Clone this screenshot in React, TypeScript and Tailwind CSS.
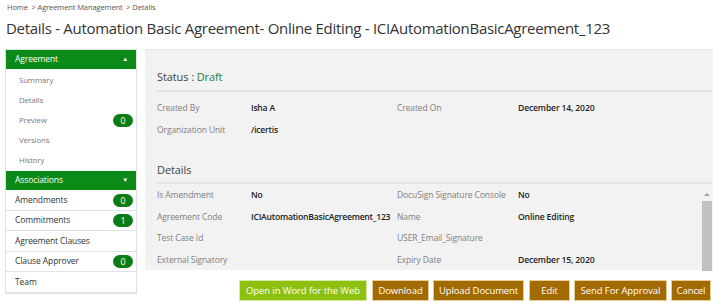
import React from "react";

const font = { fontFamily: '"Open Sans", "Noto Sans", Arial, sans-serif' };

function Badge({ n }: { n: string }) {
  return (
    <span className="inline-flex h-[13px] w-[20px] items-center justify-center rounded-full bg-[#0b7d15] text-[9px] leading-none text-white">
      {n}
    </span>
  );
}

function Row({ l1, v1, l2, v2 }: { l1: string; v1?: string; l2?: string; v2?: string }) {
  return (
    <div className="flex h-[21.7px] items-center whitespace-nowrap">
      <div className="w-[94px] text-[8.5px] tracking-[-0.1px] text-[#808080]">{l1}</div>
      <div className="w-[146px] text-[8.6px] tracking-[-0.22px] font-semibold text-[#222]">{v1}</div>
      <div className="w-[121px] text-[8.5px] tracking-[-0.1px] text-[#808080]">{l2}</div>
      <div className="text-[8.6px] tracking-[-0.15px] font-semibold text-[#222]">{v2}</div>
    </div>
  );
}

const btn = "flex h-[21px] items-center justify-center border border-[#e3cf9c] bg-[#a36a00]";

export default function App() {
  return (
    <div className="h-[308px] w-[720px] overflow-hidden bg-white" style={font}>
      <div className="px-[7px] pt-[2px] text-[7.5px] tracking-[-0.1px] text-[#555]">Home &nbsp;&gt; Agreement Management &nbsp;&gt; Details</div>
      <div className="mt-[5px] px-[6px] text-[15px] leading-[20px] tracking-[-0.3px] text-[#333]">
        Details - Automation Basic Agreement- Online Editing - ICIAutomationBasicAgreement_123
      </div>
      <div className="mt-[11px] flex">
        <div className="ml-[5px] w-[132px] self-start border border-[#e0e0e0] pb-[0px]">
          <div className="flex h-[19px] items-center justify-between bg-[#0b8a18] pl-[9px] pr-[8px] text-[8.5px] tracking-[-0.1px] text-white">
            <span>Agreement</span>
            <span className="text-[6px]">▲</span>
          </div>
          <div className="text-[7.8px] tracking-[-0.1px] text-[#7a7a7a]">
            <div className="flex h-[20px] items-center pl-[13px] pt-[3px]">Summary</div>
            <div className="flex h-[20px] items-center pl-[13px] pt-[3px]">Details</div>
            <div className="flex h-[20px] items-center justify-between pl-[13px] pr-[3px] pt-[3px]">
              <span>Preview</span>
              <Badge n="0" />
            </div>
            <div className="flex h-[20px] items-center pl-[13px] pt-[3px]">Versions</div>
            <div className="flex h-[20px] items-center pl-[13px] pt-[3px]">History</div>
          </div>
          <div className="mt-[2px] flex h-[19px] items-center justify-between bg-[#0b8a18] pl-[9px] pr-[8px] text-[8.5px] tracking-[-0.1px] text-white">
            <span>Associations</span>
            <span className="text-[6px]">▼</span>
          </div>
          <div className="text-[8.5px] tracking-[-0.1px] text-[#333]">
            {[
              ["Amendments", "0"],
              ["Commitments", "1"],
              ["Agreement Clauses", ""],
              ["Clause Approver", "0"],
              ["Team", ""],
            ].map(([t, n]) => (
              <div key={t} className="flex h-[20.5px] items-center justify-between border-b border-[#e2e2e2] pl-[9px] pr-[3px]">
                <span>{t}</span>
                {n && <Badge n={n} />}
              </div>
            ))}
          </div>
        </div>
        <div className="flex flex-col">
          <div className="ml-[8px] flex h-[221px] w-[568px] flex-col border-t border-[#e6e6e6] bg-[#f2f2f2] pl-[12px]">
            <div className="mt-[19px] text-[11px] tracking-[-0.1px] text-[#444]">
              Status : <span className="text-[#2e7d32]">Draft</span>
            </div>
            <div className="mt-[4px] mr-[1px] border-b-2 border-[#e4e4e4]" />
            <div className="mt-[6px]">
              <Row l1="Created By" v1="Isha A" l2="Created On" v2="December 14, 2020" />
              <Row l1="Organization Unit" v1="/icertis" />
            </div>
            <div className="mt-[21px] text-[11px] tracking-[-0.1px] text-[#444]">Details</div>
            <div className="mt-[3px] mr-[1px] border-b-2 border-[#e4e4e4]" />
            <div className="flex flex-1">
              <div className="flex-1 pt-[1px]">
                <Row l1="Is Amendment" v1="No" l2="DocuSign Signature Console" v2="No" />
                <Row l1="Agreement Code" v1="ICIAutomationBasicAgreement_123" l2="Name" v2="Online Editing" />
                <Row l1="Test Case Id" l2="USER_Email_Signature" />
                <Row l1="External Signatory" l2="Expiry Date" v2="December 15, 2020" />
              </div>
              <div className="mr-[1px] flex w-[10px] flex-col items-center pt-[9px]">
                <div className="h-0 w-0 border-x-[3px] border-b-[3px] border-x-transparent border-b-[#a0a0a0]" />
                <div className="mt-[5px] w-full flex-1 bg-[#c1c1c1]" />
              </div>
            </div>
          </div>
          <div className="mt-[10px] flex justify-end gap-[4px] pr-[2px] text-[9.5px] tracking-[-0.1px] text-white">
            <div className="flex h-[21px] w-[128px] items-center justify-center border border-[#d8e8a8] bg-[#8dc10e]">Open in Word for the Web</div>
            <div className={btn + " ml-[1px] w-[57px]"}>Download</div>
            <div className={btn + " w-[91px]"}>Upload Document</div>
            <div className={btn + " ml-[1px] w-[41px]"}>Edit</div>
            <div className={btn + " w-[93px]"}>Send For Approval</div>
            <div className={btn + " w-[40px]"}>Cancel</div>
          </div>
        </div>
      </div>
    </div>
  );
}
